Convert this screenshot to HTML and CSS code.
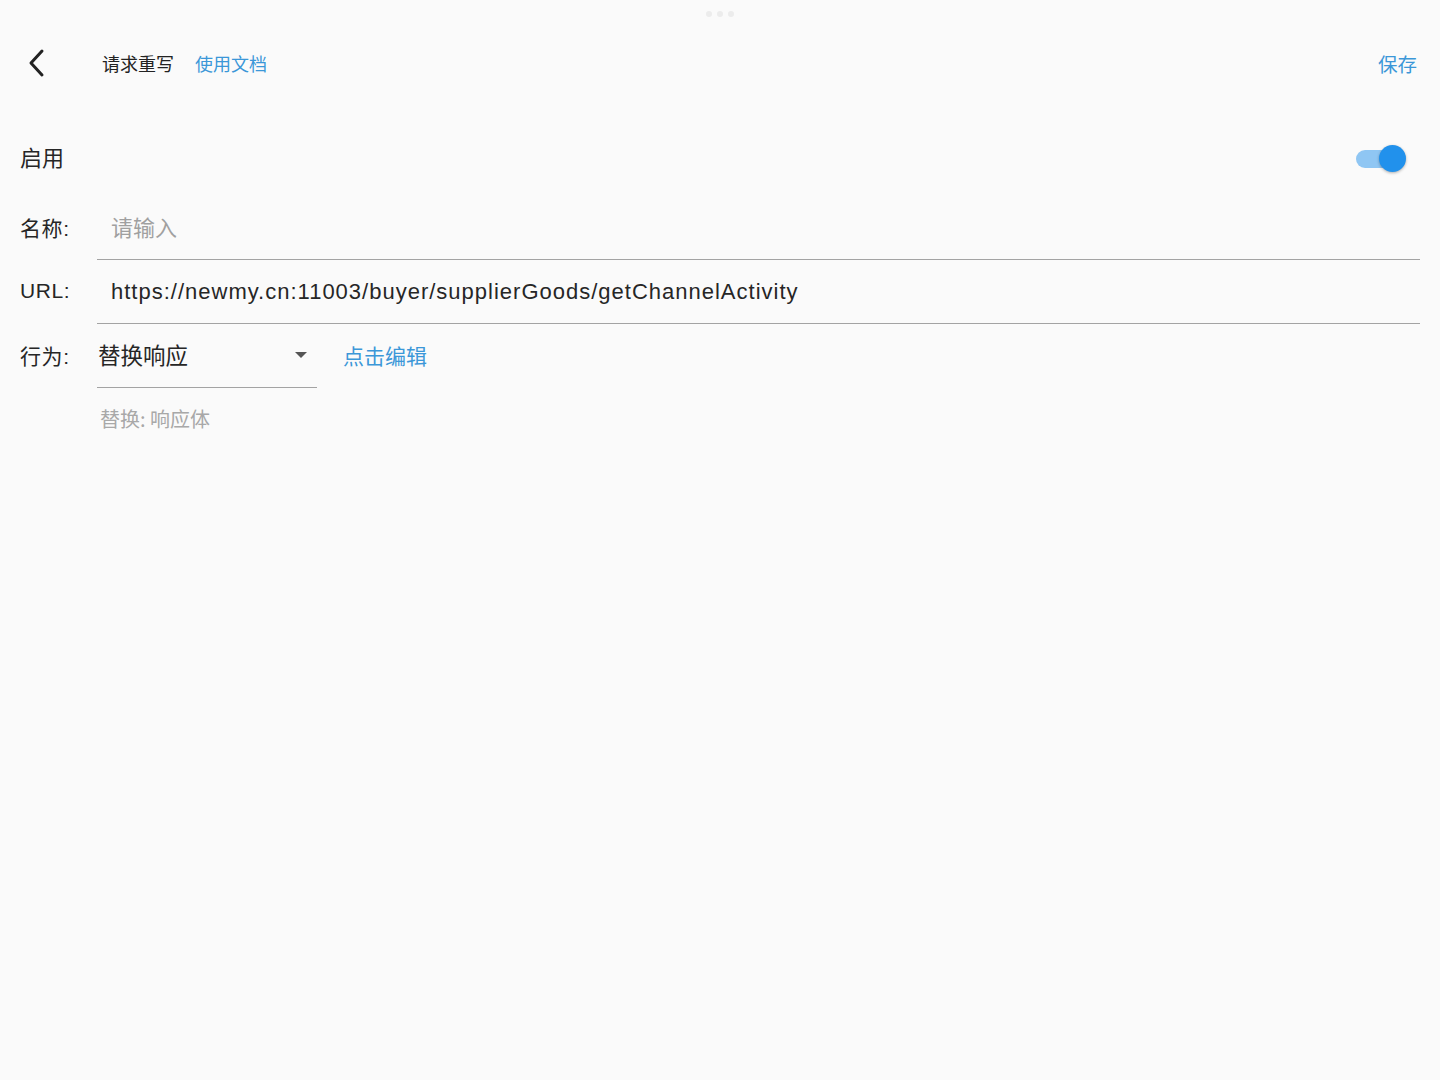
FILE: index.html
```html
<!DOCTYPE html>
<html lang="zh">
<head>
<meta charset="utf-8">
<title>请求重写</title>
<link rel="stylesheet" href="styles.css">
</head>
<body>
<div class="status">
  <span class="dots"><i></i><i></i><i></i></span>
</div>
<header class="appbar">
  <div class="back">
    <svg width="24" height="30" viewBox="0 0 24 30"><path d="M16 3 L5 15 L16 27" fill="none" stroke="#222" stroke-width="3" stroke-linecap="round" stroke-linejoin="round"/></svg>
  </div>
  <span class="title">请求重写</span>
  <span class="doc link">使用文档</span>
  <span class="spacer"></span>
  <span class="save link">保存</span>
</header>
<main class="form">
  <div class="row enable">
    <span class="enable-label">启用</span>
    <span class="switch"><span class="track"></span><span class="knob"></span></span>
  </div>
  <div class="row field-row">
    <span class="label">名称:</span>
    <div class="field"><span class="placeholder">请输入</span></div>
  </div>
  <div class="row field-row">
    <span class="label">URL:</span>
    <div class="field"><span class="value">https://newmy.cn:11003/buyer/supplierGoods/getChannelActivity</span></div>
  </div>
  <div class="row field-row action">
    <span class="label">行为:</span>
    <div class="dropdown"><span class="dd-value">替换响应</span><span class="caret"></span></div>
    <span class="edit link">点击编辑</span>
  </div>
  <div class="hint">替换: 响应体</div>
</main>
</body>
</html>
```
FILE: styles.css
```css
* { box-sizing: border-box; }
html, body { margin: 0; padding: 0; }
body {
  background: #fafafa;
  width: 1440px;
  height: 1080px;
  font-family: "Liberation Sans", "Noto Sans CJK SC", sans-serif;
  color: #262626;
  overflow: hidden;
}
.status {
  height: 27px;
  display: flex;
  justify-content: center;
  align-items: center;
}
.dots { display: flex; gap: 5px; }
.dots i { width: 6px; height: 6px; border-radius: 50%; background: #ececec; display: block; }
.appbar {
  height: 72px;
  display: flex;
  align-items: center;
  padding: 0 23px 0 26px;
}
.back { width: 24px; height: 30px; display: flex; }
.title { margin-left: 52px; font-size: 18px; color: #222; font-family: "Noto Sans CJK SC", sans-serif; }
.doc { margin-left: 21px; font-size: 18px; }
.link { color: #3b97d8; font-family: "Noto Sans CJK SC", sans-serif; }
.spacer { flex: 1; }
.save { font-size: 19.5px; }
.form { padding: 0 20px; }
.row { display: flex; align-items: center; }
.enable { margin-top: 19px; height: 78px; justify-content: space-between; }
.enable-label { font-size: 22px; font-family: "Noto Sans CJK SC", sans-serif; padding-bottom: 2px; }
.switch { position: relative; width: 50px; height: 28px; margin-right: 14px; margin-top: 4px; }
.track {
  position: absolute; left: 0; top: 5px; width: 42px; height: 18px;
  border-radius: 9px; background: #8fc6f3;
}
.knob {
  position: absolute; right: 0; top: 0; width: 27px; height: 27px;
  border-radius: 50%; background: #2191ec;
  box-shadow: 0 1px 3px rgba(0,0,0,0.3);
}
.label {
  width: 77px; font-size: 21px; letter-spacing: 0.6px; padding-bottom: 3px;
  font-family: "Liberation Sans", "Noto Sans CJK SC", sans-serif; color: #262626;
}
.field-row { height: 64px; }
.field {
  flex: 1; height: 64px; display: flex; align-items: center;
  padding-left: 14px; border-bottom: 1.5px solid #a3a3a3;
}
.placeholder { font-size: 22px; color: #a0a0a0; font-family: "Noto Sans CJK SC", sans-serif; padding-bottom: 3px; }
.value { font-size: 22px; letter-spacing: 1px; color: #262626; padding-top: 1px; }
.action { height: 64px; }
.dropdown {
  width: 220px; height: 64px; display: flex; align-items: center; justify-content: space-between;
  border-bottom: 1.5px solid #a3a3a3; padding-left: 1px; padding-right: 10px;
}
.dd-value { font-size: 22.5px; font-family: "Noto Sans CJK SC", sans-serif; padding-bottom: 3px; }
.caret {
  width: 0; height: 0; border-left: 6px solid transparent; border-right: 6px solid transparent;
  border-top: 6px solid #555; margin-bottom: 1px;
}
.edit { margin-left: 26px; font-size: 21px; padding-bottom: 2px; }
.hint { padding-left: 80px; margin-top: 16px; font-size: 20px; color: #a8a8a8; font-family: "Noto Sans CJK SC", sans-serif; }
```
